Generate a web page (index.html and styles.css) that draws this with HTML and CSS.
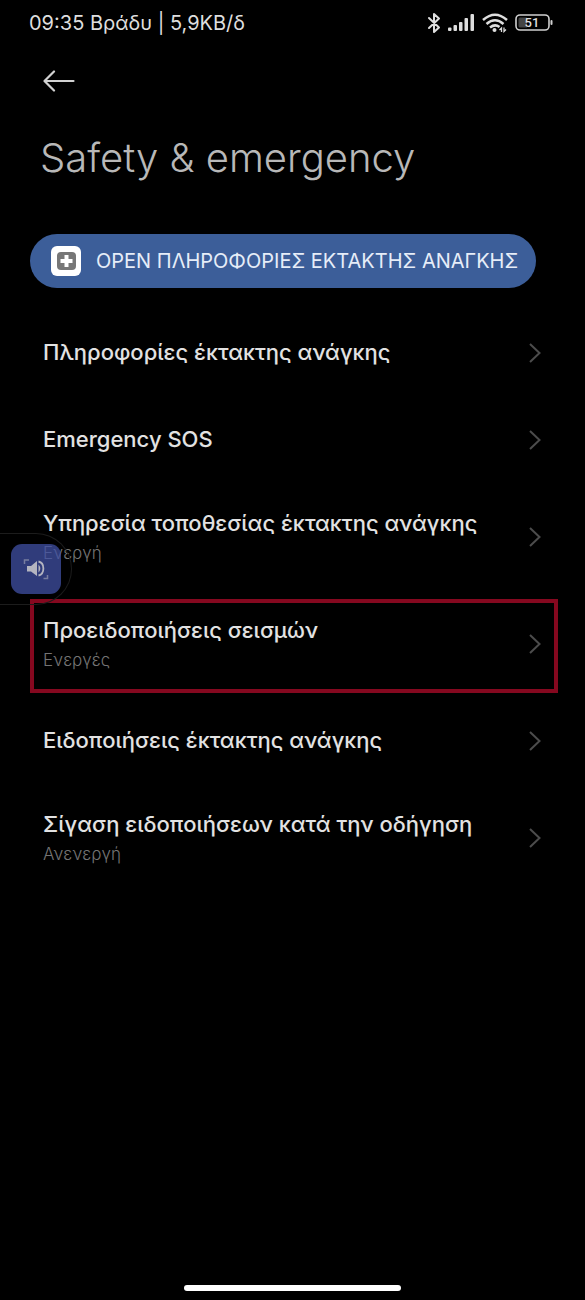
FILE: index.html
```html
<!DOCTYPE html>
<html lang="el">

<head>
    <meta charset="UTF-8">
    <meta name="viewport" content="width=device-width, initial-scale=1.0">
    <title>Safety &amp; emergency</title>
    <link rel="stylesheet" href="styles.css">
</head>

<body>
    <div class="status-bar">
        <span>09:35 Βράδυ | 5,9KB/δ</span>
        <div class="status-icons">
            <svg width="14" height="22" viewBox="0 0 14 22" fill="none" stroke="#dedede" stroke-width="2" stroke-linejoin="round" stroke-linecap="round">
                <path d="M2 6L12 15.500L7 20V2L12 6.500L2 16" />
            </svg>
            <svg width="27" height="20" viewBox="0 0 27 20" fill="#dedede">
                <rect x="0" y="14.500" width="3.500" height="3.500" rx="1" />
                <rect x="5.500" y="12" width="3.500" height="6" rx="1" />
                <rect x="11" y="9" width="3.500" height="9" rx="1" />
                <rect x="16.500" y="5" width="3.500" height="13" rx="1" />
                <rect x="22.500" y="1" width="3.500" height="17" rx="1" />
            </svg>
            <svg width="26" height="20" viewBox="0 0 26 20" fill="none" stroke="#dedede" stroke-width="2.500">
                <path d="M1 7Q13 -3.500 25 7M4.500 11Q13 3.500 21.500 11M8 14.500Q13 10.500 17.500 14" />
                <circle cx="12.500" cy="17" r="2" fill="#dedede" stroke="none" />
                <path d="M19.500 19V15L17.500 17M22 14.500V18.500L24 16.500" stroke-width="1.300" />
            </svg>
            <svg width="38" height="18" viewBox="0 0 38 18">
                <rect x="1" y="1" width="33" height="15" rx="4" fill="none" stroke="#cfcfcf" stroke-width="1.600" />
                <path d="M5 3.500H12V13.500H5Q3.500 13.500 3.500 12V5Q3.500 3.500 5 3.500Z" fill="#444" />
                <rect x="35.500" y="6" width="2" height="5" rx="1" fill="#cfcfcf" />
                <text class="battery-text" x="17" y="13" text-anchor="middle">51</text>
            </svg>
        </div>
    </div>

    <header class="header">
        <button class="back-button" aria-label="Back">
            <svg width="32" height="22" viewBox="0 0 32 22" fill="none" stroke="#d2d2d2" stroke-width="2.200" stroke-linecap="round" stroke-linejoin="round">
                <path d="M11 1.500L1.500 11L11 20.500M1.500 11H30.500" />
            </svg>
        </button>
        <h1 class="title">Safety &amp; emergency</h1>
    </header>

    <main>
        <button class="open-button">
            <svg width="30" height="30" viewBox="0 0 30 30">
                <rect width="30" height="30" rx="6" fill="#fff" />
                <rect x="6" y="6" width="19" height="18" rx="4" fill="#777" />
                <path d="M15.500 9V21M9.500 15H21.500" stroke="#fff" stroke-width="4" />
            </svg>
            <span>OPEN ΠΛΗΡΟΦΟΡΙΕΣ ΕΚΤΑΚΤΗΣ ΑΝΑΓΚΗΣ</span>
        </button>

        <nav class="settings-list">
            <a class="row" href="#">
                <span class="row-title">Πληροφορίες έκτακτης ανάγκης</span>
                <svg class="chevron" width="12" height="20" viewBox="0 0 12 20"><path d="M1 1L10.500 10L1 19" /></svg>
            </a>
            <a class="row" href="#">
                <span class="row-title">Emergency SOS</span>
                <svg class="chevron" width="12" height="20" viewBox="0 0 12 20"><path d="M1 1L10.500 10L1 19" /></svg>
            </a>
            <a class="row two-lines" href="#">
                <span class="row-text">
                    <span class="row-title">Υπηρεσία τοποθεσίας έκτακτης ανάγκης</span>
                    <span class="row-status">Ενεργή</span>
                </span>
                <svg class="chevron" width="12" height="20" viewBox="0 0 12 20"><path d="M1 1L10.500 10L1 19" /></svg>
            </a>
            <a class="row two-lines highlighted" href="#">
                <span class="row-text">
                    <span class="row-title">Προειδοποιήσεις σεισμών</span>
                    <span class="row-status">Ενεργές</span>
                </span>
                <svg class="chevron" width="12" height="20" viewBox="0 0 12 20"><path d="M1 1L10.500 10L1 19" /></svg>
            </a>
            <a class="row" href="#">
                <span class="row-title">Ειδοποιήσεις έκτακτης ανάγκης</span>
                <svg class="chevron" width="12" height="20" viewBox="0 0 12 20"><path d="M1 1L10.500 10L1 19" /></svg>
            </a>
            <a class="row two-lines" href="#">
                <span class="row-text">
                    <span class="row-title">Σίγαση ειδοποιήσεων κατά την οδήγηση</span>
                    <span class="row-status">Ανενεργή</span>
                </span>
                <svg class="chevron" width="12" height="20" viewBox="0 0 12 20"><path d="M1 1L10.500 10L1 19" /></svg>
            </a>
        </nav>
    </main>

    <!-- floating read-aloud shortcut -->
    <div class="floating-tab">
        <button class="sound-button" aria-label="Sound">
            <svg width="26" height="22" viewBox="0 0 26 22" fill="none">
                <path d="M1.500 6V2H6M24.500 17V20.500H20.500" stroke="#777da0" stroke-width="1.500" />
                <path d="M4 8H8L14 3V18L8 13.500H4Z" fill="#b4b5c0" />
                <path d="M15.500 6.500Q19 10.500 15.500 14.500Z" fill="#b4b5c0" />
                <path d="M15.500 3.500C22 5 22 16 15.500 17.500" stroke="#b4b5c0" stroke-width="1.800" />
            </svg>
        </button>
    </div>

    <div class="home-indicator"></div>
</body>

</html>
```
FILE: styles.css
```css
body {
    margin: 0;
    min-height: 100vh;
    display: flex;
    flex-direction: column;
    position: relative;
    background-color: #000;
    color: #e2e2e2;
    font-family: Inter, "Noto Sans", sans-serif;
}

button {
    border: none;
    padding: 0;
    font-family: inherit;
    cursor: pointer;
}

svg {
    display: block;
    flex-shrink: 0;
}

.status-bar {
    display: flex;
    justify-content: space-between;
    align-items: center;
    height: 46px;
    padding: 0 32px 0 29px;
    font-size: 20px;
    color: #dedede;
}

.status-icons {
    display: flex;
    align-items: center;
    gap: 7px;
}

.battery-text {
    font-family: Roboto, sans-serif;
    font-size: 13px;
    font-weight: 500;
    fill: #dedede;
}

.header {
    padding: 24px 40px 0;
}

.back-button {
    display: block;
    margin-left: 3px;
    background: none;
}

.title {
    margin: 40px 0 0;
    font-size: 40px;
    line-height: 52px;
    font-weight: 300;
    color: #b8b8b8;
}

.open-button {
    display: flex;
    align-items: center;
    gap: 15px;
    height: 54px;
    margin: 50px 30px 0;
    padding: 0 18px 0 21px;
    border-radius: 27px;
    background-color: #3c5e99;
    color: #e6edf8;
    font-size: 20px;
    white-space: nowrap;
}

.settings-list {
    margin-top: 21px;
}

.row {
    display: flex;
    justify-content: space-between;
    align-items: center;
    position: relative;
    padding: 28px 44px 28px 43px;
    color: #e2e2e2;
    text-decoration: none;
}

.row-text {
    display: flex;
    flex-direction: column;
    gap: 2px;
}

.row-title {
    font-size: 22px;
    line-height: 31px;
    font-weight: 500;
}

.row-status {
    font-size: 17px;
    line-height: 24px;
    font-weight: 300;
    color: #747474;
}

.two-lines {
    padding-top: 25px;
    padding-bottom: 25px;
}

.highlighted::after {
    content: "";
    position: absolute;
    top: 9px;
    right: 27px;
    bottom: 4px;
    left: 30px;
    border: 4px solid #85081f;
}

.chevron {
    fill: none;
    stroke: #4c4c4c;
    stroke-width: 2;
}

.floating-tab {
    position: absolute;
    top: 533px;
    left: 0;
    display: flex;
    align-items: center;
    padding: 10px 10px 10px 11px;
    border: 1px solid #1c1c1c;
    border-left: none;
    border-radius: 0 36px 36px 0;
}

.sound-button {
    display: flex;
    align-items: center;
    justify-content: center;
    width: 50px;
    height: 50px;
    border-radius: 11px;
    background-color: rgba(64, 80, 164, 0.75);
}

.home-indicator {
    width: 37%;
    height: 6px;
    margin: auto auto 9px;
    border-radius: 3px;
    background-color: #fff;
}
```
